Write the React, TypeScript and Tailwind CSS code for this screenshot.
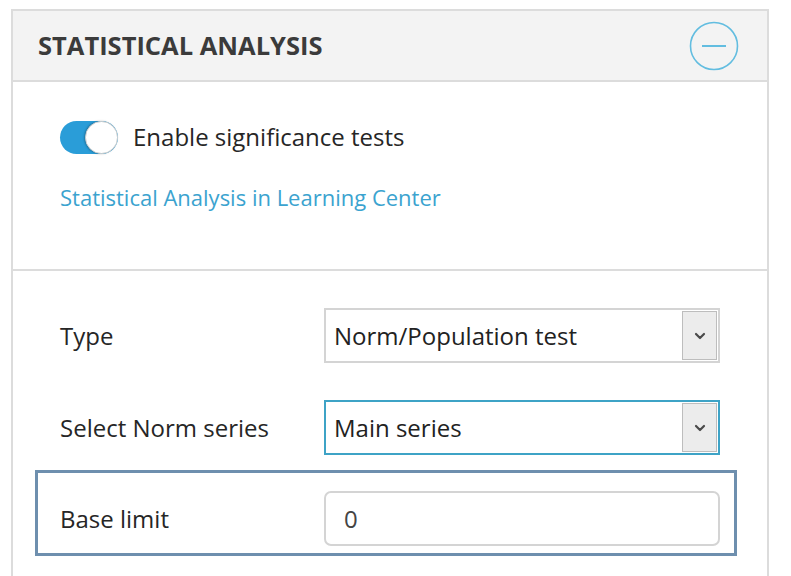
import React from "react";

const Chevron = () => (
  <svg width="12" height="8" viewBox="0 0 12 8" fill="none">
    <path d="M2 2l4 4 4-4" stroke="#4a4a4a" strokeWidth="2.2" strokeLinecap="round" strokeLinejoin="round" />
  </svg>
);

function Select({ value, active }: { value: string; active?: boolean }) {
  return (
    <div
      className={
        "flex h-[55px] w-[396px] items-stretch bg-white " +
        (active ? "border-2 border-[#3ea3c6]" : "border-2 border-[#d4d4d4]")
      }
    >
      <div className="flex flex-1 items-center pl-[8px] text-[24px] text-[#222]">{value}</div>
      <div className="my-[1px] mr-[1px] flex w-[35px] items-center justify-center border border-[#bdbdbd] bg-[#ececec]">
        <Chevron />
      </div>
    </div>
  );
}

export default function App() {
  return (
    <div
      className="h-[576px] w-[791px] overflow-hidden bg-white pt-[9px] pl-[11px]"
      style={{ fontFamily: '"Open Sans", "Noto Sans", sans-serif' }}
    >
      <div className="h-[600px] w-[758px] border-2 border-b-0 border-[#dcdcdc]">
        <div className="flex h-[71px] items-center justify-between border-b-2 border-[#dcdcdc] bg-[#f3f3f3] pl-[25px] pr-[28px]">
          <div className="text-[25.5px] font-bold text-[#3b3b3b]">STATISTICAL ANALYSIS</div>
          <svg width="50" height="50" viewBox="0 0 50 50" fill="none">
            <circle cx="25" cy="25" r="23.5" stroke="#62bde0" strokeWidth="1.6" />
            <line x1="13" y1="25" x2="37" y2="25" stroke="#62bde0" strokeWidth="2" />
          </svg>
        </div>
        <div className="h-[189px] border-b-2 border-[#dcdcdc] pl-[47px] pt-[37px]">
          <div className="flex items-center gap-[15px]">
            <div className="relative h-[33px] w-[58px] rounded-full bg-[#2a9dd8]">
              <div className="absolute right-[0px] top-[0px] h-[33px] w-[33px] rounded-full border border-[#d0d0d0] bg-white shadow-[-1px_0_2px_rgba(0,0,0,0.25)]" />
            </div>
            <div className="text-[24px] text-[#262626]">Enable significance tests</div>
          </div>
          <div className="mt-[26px] text-[22px] text-[#3ba3cf]">Statistical Analysis in Learning Center</div>
        </div>
        <div className="pt-[37px]">
          <div className="flex items-center pl-[47px]">
            <div className="w-[264px] text-[24px] text-[#262626]">Type</div>
            <Select value="Norm/Population test" />
          </div>
          <div className="mt-[37px] flex items-center pl-[47px]">
            <div className="w-[264px] text-[24px] text-[#262626]">Select Norm series</div>
            <Select value="Main series" active />
          </div>
          <div className="ml-[22px] mt-[15px] flex h-[86px] w-[702px] items-start border-[3px] border-[#6e8fae] pl-[22px] pt-[18px]">
            <div className="flex h-[55px] w-[264px] items-center text-[24px] text-[#262626]">Base limit</div>
            <div className="flex h-[55px] w-[396px] items-center rounded-[7px] border-2 border-[#d4d4d4] pl-[18px] text-[24px] text-[#444]">
              0
            </div>
          </div>
        </div>
      </div>
    </div>
  );
}
